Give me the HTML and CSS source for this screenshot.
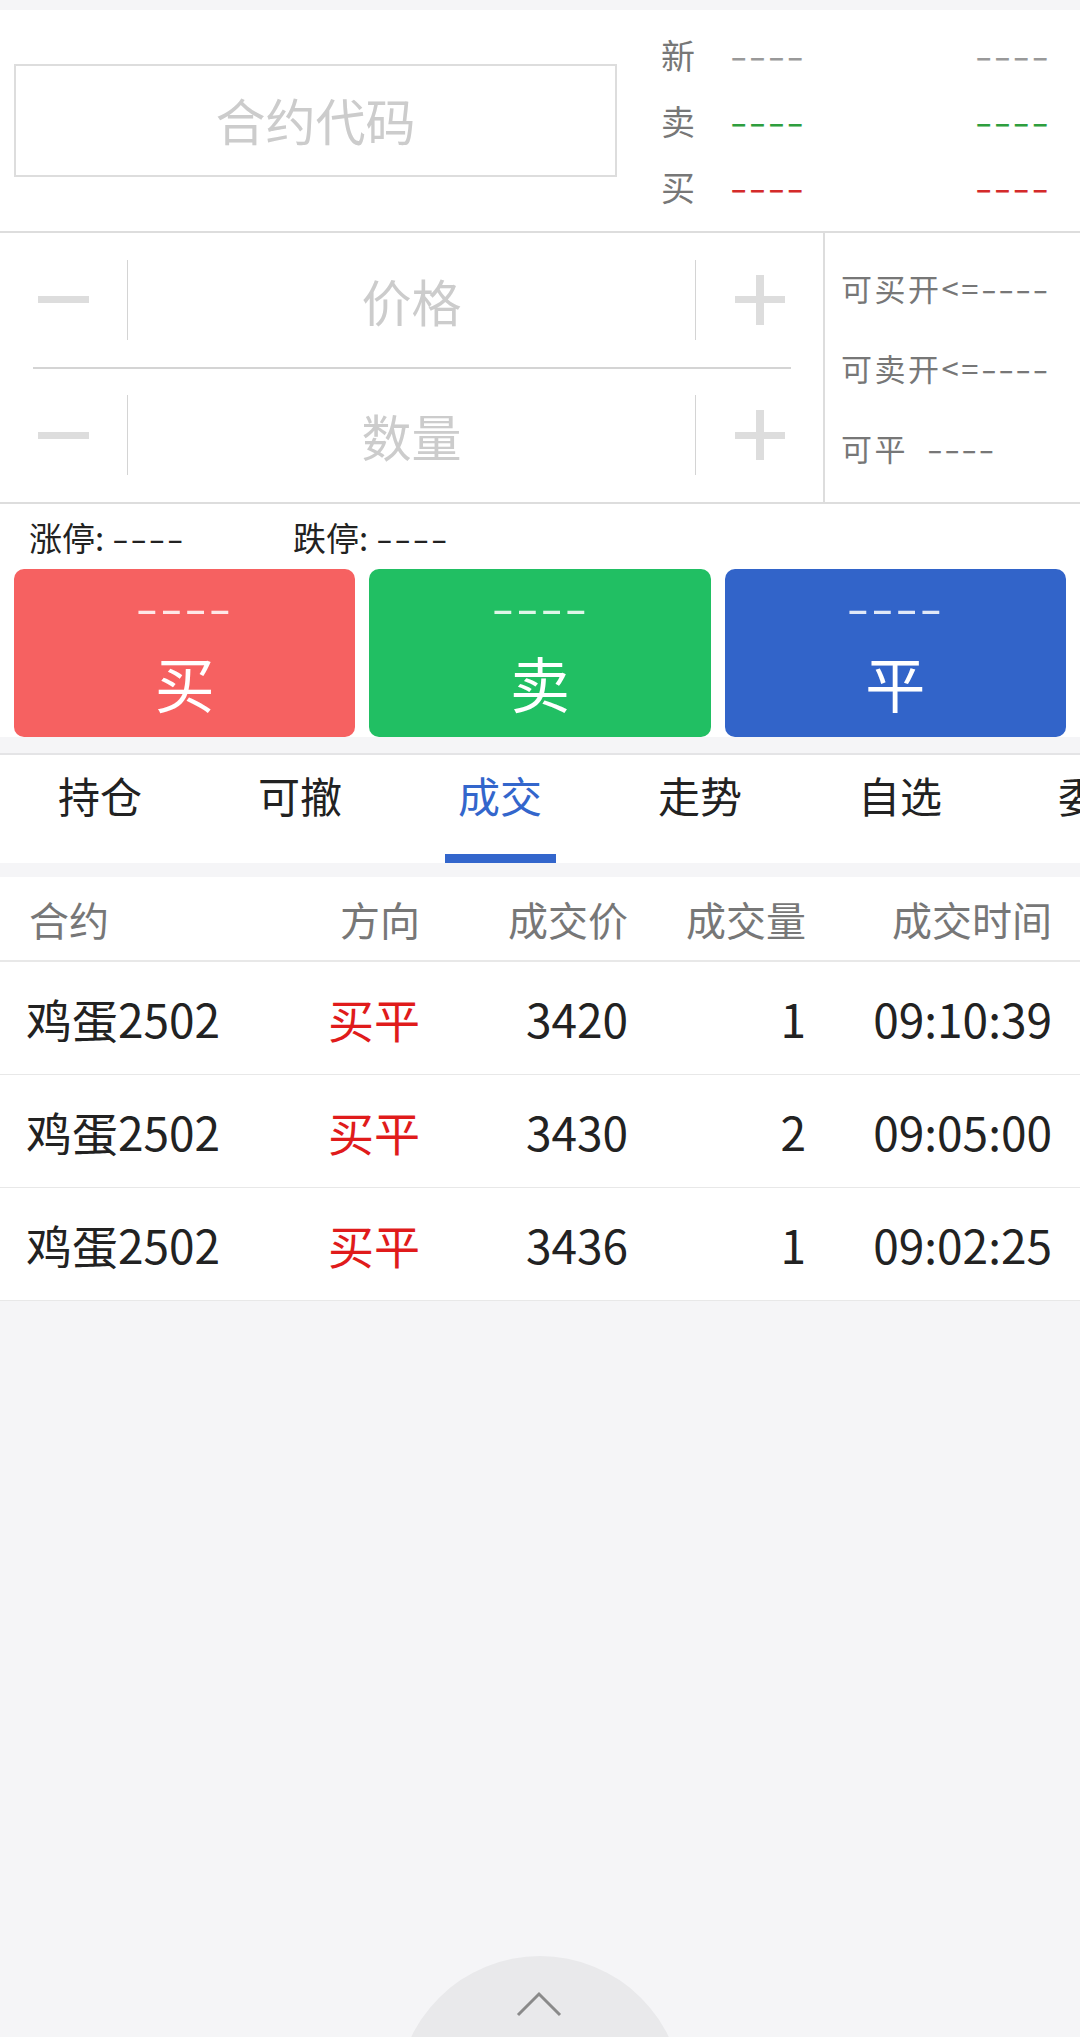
FILE: index.html
```html
<!DOCTYPE html>
<html lang="zh-CN">
<head>
    <meta charset="UTF-8">
    <meta name="viewport" content="width=device-width, initial-scale=1.0">
    <title>交易</title>
    <link rel="stylesheet" href="styles.css">
</head>
<body>
    <div class="quote">
        <div class="code-input">合约代码</div>
        <div class="board">
            <span class="board-label">新</span>
            <span class="dash">----</span>
            <span class="dash">----</span>
            <span class="board-label">卖</span>
            <span class="dash green">----</span>
            <span class="dash green">----</span>
            <span class="board-label">买</span>
            <span class="dash red">----</span>
            <span class="dash red">----</span>
        </div>
    </div>

    <div class="order">
        <div class="steppers">
            <div class="stepper-row">
                <div class="step-btn"><span class="minus"></span></div>
                <div class="step-field">价格</div>
                <div class="step-btn"><span class="plus"></span></div>
            </div>
            <div class="rule"></div>
            <div class="stepper-row">
                <div class="step-btn"><span class="minus"></span></div>
                <div class="step-field">数量</div>
                <div class="step-btn"><span class="plus"></span></div>
            </div>
        </div>
        <div class="avail">
            <div>可买开&lt;=<span class="dash">----</span></div>
            <div>可卖开&lt;=<span class="dash">----</span></div>
            <div>可平&nbsp;&nbsp;<span class="dash">----</span></div>
        </div>
    </div>

    <div class="trade">
        <div class="limits">
            <span class="limit">涨停: <span class="dash">----</span></span>
            <span class="limit">跌停: <span class="dash">----</span></span>
        </div>
        <div class="actions">
            <button class="action buy"><span class="action-price">----</span><span class="action-name">买</span></button>
            <button class="action sell"><span class="action-price">----</span><span class="action-name">卖</span></button>
            <button class="action close"><span class="action-price">----</span><span class="action-name">平</span></button>
        </div>
    </div>

    <nav class="tabs">
        <div class="tab">持仓</div>
        <div class="tab">可撤</div>
        <div class="tab active">成交</div>
        <div class="tab">走势</div>
        <div class="tab">自选</div>
        <div class="tab">委托</div>
    </nav>

    <div class="deals">
        <div class="deal-row deal-head">
            <span>合约</span>
            <span>方向</span>
            <span>成交价</span>
            <span>成交量</span>
            <span>成交时间</span>
        </div>
        <div class="deal-row">
            <span>鸡蛋2502</span>
            <span class="dir">买平</span>
            <span>3420</span>
            <span>1</span>
            <span>09:10:39</span>
        </div>
        <div class="deal-row">
            <span>鸡蛋2502</span>
            <span class="dir">买平</span>
            <span>3430</span>
            <span>2</span>
            <span>09:05:00</span>
        </div>
        <div class="deal-row">
            <span>鸡蛋2502</span>
            <span class="dir">买平</span>
            <span>3436</span>
            <span>1</span>
            <span>09:02:25</span>
        </div>
    </div>

    <div class="scroll-top">
        <svg width="286" height="120" viewBox="0 0 286 120">
            <polyline points="121,59 142,38 163,59" fill="none" stroke="#8a8a8a" stroke-width="3"/>
        </svg>
    </div>
</body>
</html>
```

FILE: styles.css
```css
body {
    margin: 0;
    padding: 0;
    min-height: 2037px;
    background-color: #f5f5f7;
    font-family: "Noto Sans CJK SC", "Noto Sans", sans-serif;
    color: #222;
    overflow: hidden;
}
/* the placeholder dashes are wider in the app font */
.dash {
    display: inline-block;
    letter-spacing: 0.03em;
    transform: scaleX(1.47);
    transform-origin: left center;
}
.green {
    color: #2e9e3e;
}
.red {
    color: #d42a2a;
}

/* quote */
.quote {
    margin-top: 10px;
    height: 221px;
    background: #fff;
    border-bottom: 2px solid #ddd;
    display: flex;
    align-items: center;
}
.code-input {
    margin-left: 14px;
    width: 603px;
    height: 113px;
    box-sizing: border-box;
    border: 2px solid #ddd;
    display: flex;
    align-items: center;
    justify-content: center;
    padding-bottom: 4px;
    font-size: 50px;
    color: #ccc;
}
.board {
    margin-left: 44px;
    margin-right: 30px;
    flex: 1;
    display: grid;
    grid-template-columns: 69px 1fr auto;
    grid-auto-rows: 66px;
    align-items: center;
    font-size: 34px;
    color: #999;
}
.board-label {
    color: #777;
}
.board .dash:nth-child(3n) {
    justify-self: end;
    transform-origin: right center;
}

/* price / quantity */
.order {
    height: 269px;
    background: #fff;
    border-bottom: 2px solid #ddd;
    display: flex;
}
.steppers {
    width: 823px;
    display: flex;
    flex-direction: column;
}
.stepper-row {
    flex: 1;
    display: flex;
    align-items: center;
}
.step-btn {
    width: 127px;
    height: 100%;
    display: flex;
    align-items: center;
    justify-content: center;
}
.minus {
    width: 51px;
    height: 7px;
    background: #ddd;
}
.plus {
    width: 50px;
    height: 50px;
    background:
        linear-gradient(#ddd, #ddd) center / 50px 7px no-repeat,
        linear-gradient(#ddd, #ddd) center / 8px 50px no-repeat;
}
.step-field {
    flex: 1;
    height: 80px;
    border-left: 1px solid #d4d4d4;
    border-right: 1px solid #d4d4d4;
    display: flex;
    align-items: center;
    justify-content: center;
    font-size: 50px;
    color: #ccc;
}
.rule {
    height: 2px;
    margin: 0 32px 0 33px;
    background: #d4d4d4;
}
.avail {
    flex: 1;
    border-left: 2px solid #ddd;
    padding-left: 16px;
    display: flex;
    flex-direction: column;
    justify-content: center;
    font-size: 31px;
    line-height: 80px;
    letter-spacing: 2.5px;
    color: #777;
    white-space: nowrap;
}

/* limits + buttons */
.trade {
    background: #fff;
}
.limits {
    height: 65px;
    padding-left: 29px;
    display: flex;
    align-items: center;
    font-size: 33px;
    color: #222;
}
.limit {
    width: 264px;
}
.actions {
    display: grid;
    grid-template-columns: repeat(3, 1fr);
    gap: 14px;
    padding: 0 14px;
}
.action {
    height: 168px;
    border: none;
    border-radius: 10px;
    padding: 6px 0 0;
    display: flex;
    flex-direction: column;
    align-items: center;
    justify-content: flex-start;
    font-family: inherit;
    color: #fff;
}
.action-price {
    display: inline-block;
    font-size: 46px;
    line-height: 60px;
    letter-spacing: 0.025em;
    transform: scaleX(1.42);
    color: rgba(255, 255, 255, 0.85);
}
.action-name {
    margin-top: 7px;
    font-size: 60px;
    line-height: 80px;
}
.buy {
    background: #f66161;
}
.sell {
    background: #21bf63;
}
.close {
    background: #3264c9;
}

/* tabs */
.tabs {
    margin-top: 16px;
    height: 108px;
    background: #fff;
    border-top: 2px solid #e4e4e6;
    display: flex;
    overflow: hidden;
    white-space: nowrap;
}
.tab {
    flex: 0 0 200px;
    display: flex;
    flex-direction: column;
    align-items: center;
    padding-top: 18px;
    box-sizing: border-box;
    font-size: 42px;
    line-height: 44px;
    color: #222;
}
.tab.active {
    color: #3366cc;
}
.tab.active::after {
    content: "";
    margin-top: auto;
    width: 111px;
    height: 9px;
    background: #3366cc;
}

/* deals table */
.deals {
    margin-top: 14px;
    background: #fff;
}
.deal-row {
    display: grid;
    grid-template-columns: 214px 180px 208px 178px 1fr;
    align-items: center;
    height: 112px;
    padding: 0 28px 0 26px;
    border-bottom: 1px solid #e8e8e8;
    font-size: 46px;
    color: #222;
}
.deal-row span:not(:first-child) {
    text-align: right;
}
.deal-head {
    height: 83px;
    border-bottom: 2px solid #e8e8e8;
    font-size: 40px;
    color: #777;
}
.deal-head span:first-child {
    padding-left: 3px;
}
.dir {
    color: #e01b1b;
}

.scroll-top {
    position: fixed;
    left: 397px;
    top: 1956px;
    width: 286px;
    height: 286px;
    border-radius: 50%;
    background: #e9e9eb;
}
```
